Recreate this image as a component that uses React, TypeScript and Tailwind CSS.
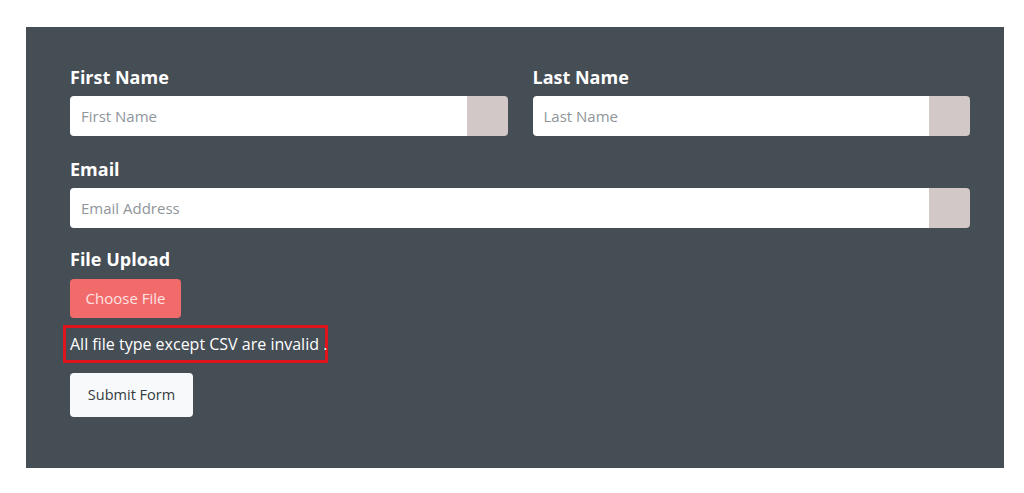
import React from "react";

function Field({ label, placeholder }: { label: string; placeholder: string }) {
  return (
    <div className="flex flex-col">
      <label className="text-[18px] leading-[27px] font-bold text-white mb-[5px]">{label}</label>
      <div className="flex h-[40px] rounded-[4px] overflow-hidden">
        <input
          className="flex-1 min-w-0 bg-white pl-[11px] text-[15px] text-[#495057] placeholder:text-[#8f959a] outline-none"
          placeholder={placeholder}
        />
        <div className="w-[41px] bg-[#d3c8c8]" />
      </div>
    </div>
  );
}

export default function App() {
  return (
    <div className="w-[1024px] h-[493px] bg-white pt-[27px] pl-[26px]" style={{ fontFamily: '"Open Sans", "Noto Sans", sans-serif' }}>
      <div className="w-[978px] h-[441px] bg-[#454d55] pt-[37px] pl-[44px] pr-[34px]">
        <div className="grid grid-cols-2 gap-x-[25px]">
          <Field label="First Name" placeholder="First Name" />
          <Field label="Last Name" placeholder="Last Name" />
        </div>
        <div className="mt-[20px]">
          <Field label="Email" placeholder="Email Address" />
        </div>
        <div className="mt-[18px] flex flex-col items-start">
          <label className="text-[18px] leading-[27px] font-bold text-white">File Upload</label>
          <button className="mt-[6px] w-[111px] h-[39px] rounded-[4px] bg-[#f26b6b] text-[15px] text-[#fde2e2]">
            Choose File
          </button>
          <div className="mt-[7px] -ml-[7px] w-[265px] h-[38px] border-[3px] border-[#e0141e] flex items-center pl-[4px]">
            <span className="text-[16px] text-white whitespace-nowrap">All file type except CSV are invalid .</span>
          </div>
          <button className="mt-[10px] w-[123px] h-[44px] rounded-[4px] bg-[#f8f9fa] text-[14.5px] text-[#343a40]">
            Submit Form
          </button>
        </div>
      </div>
    </div>
  );
}
